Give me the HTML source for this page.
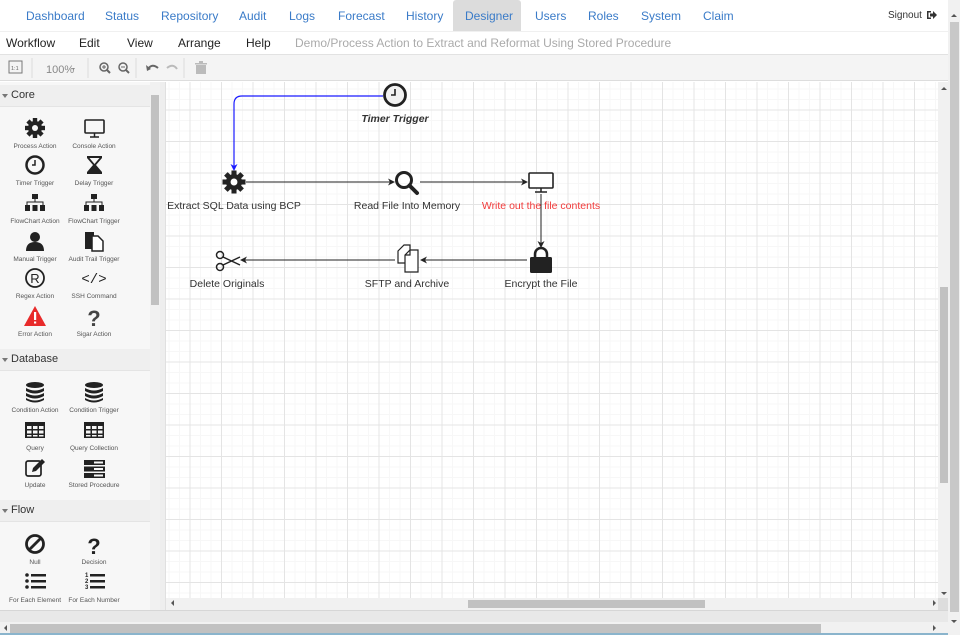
<!DOCTYPE html>
<html><head><meta charset="utf-8"><style>
*{margin:0;padding:0;box-sizing:border-box}
body{width:960px;height:635px;overflow:hidden;background:#fff;font-family:"Liberation Sans",sans-serif;position:relative}
.a{position:absolute}
.nav span{position:absolute;top:9px;font-size:12px;color:#3a7bc8}
.menu span{position:absolute;top:36px;font-size:12px;color:#222}
.lbl{position:absolute;font-size:6.5px;color:#555;width:70px;text-align:center}
.hdr{position:absolute;left:0;width:150px;height:22px;background:#efefef;font-size:11px;color:#333;padding:4px 0 0 11px;border-bottom:1px solid #e4e4e4}
.hdr:before{content:"";position:absolute;left:2px;top:9px;border-left:3px solid transparent;border-right:3px solid transparent;border-top:4px solid #777}
.cl{position:absolute;font-size:10.5px;color:#333;text-align:center;width:180px}
</style></head><body>
<div class="a" style="left:453px;top:0;width:68px;height:31px;background:#dcdcdc;border-radius:3px 3px 0 0"></div>
<div class="nav">
<span style="left:26px">Dashboard</span><span style="left:105px">Status</span><span style="left:161px">Repository</span><span style="left:239px">Audit</span><span style="left:289px">Logs</span><span style="left:338px">Forecast</span><span style="left:406px">History</span><span style="left:465px">Designer</span><span style="left:535px">Users</span><span style="left:588px">Roles</span><span style="left:641px">System</span><span style="left:703px">Claim</span>
</div>
<div class="a" style="left:888px;top:10px;font-size:10px;color:#333">Signout</div>
<svg class="a" style="left:926px;top:10px" width="12" height="10"><path d="M1 1h4v1.5H2.5v5H5V9H1z" fill="#333"/><path d="M4 3.5h3V1l4 4-4 4V6.5H4z" fill="#333"/></svg>
<div class="a" style="left:0;top:31px;width:948px;height:24px;border-top:1px solid #f0f0f0;border-bottom:1px solid #e2e2e2"></div>
<div class="menu">
<span style="left:6px">Workflow</span><span style="left:79px">Edit</span><span style="left:127px">View</span><span style="left:178px">Arrange</span><span style="left:246px">Help</span><span style="left:295px;color:#aaa">Demo/Process Action to Extract and Reformat Using Stored Procedure</span>
</div>
<div class="a" style="left:0;top:55px;width:948px;height:26px;background:#f4f4f4;border-bottom:1px solid #ddd"></div>
<svg class="a" style="left:0;top:55px" width="220" height="26">
<rect x="9" y="6" width="13" height="12" fill="none" stroke="#777" stroke-width="1"/><text x="11" y="15" font-size="5.5" fill="#666" font-family="Liberation Sans">1:1</text>
<line x1="32" y1="3" x2="32" y2="23" stroke="#ddd"/>
<text x="46" y="18" font-size="11" fill="#888" font-family="Liberation Sans">100%</text><path d="M72 13l3 0-1.5 2z" fill="#888"/>
<line x1="88" y1="3" x2="88" y2="23" stroke="#ddd"/>
<circle cx="104" cy="12" r="4" fill="none" stroke="#666" stroke-width="1.5"/><line x1="107" y1="15" x2="110" y2="18" stroke="#666" stroke-width="2"/><path d="M102 12h4M104 10v4" stroke="#666"/>
<circle cx="123" cy="12" r="4" fill="none" stroke="#666" stroke-width="1.5"/><line x1="126" y1="15" x2="129" y2="18" stroke="#666" stroke-width="2"/><path d="M121 12h4" stroke="#666"/>
<line x1="136" y1="3" x2="136" y2="23" stroke="#ddd"/>
<path d="M148 14q4-6 10-1" fill="none" stroke="#666" stroke-width="2"/><path d="M146 10l1 6 4-2z" fill="#666"/>
<path d="M177 14q-4-6-10-1" fill="none" stroke="#bbb" stroke-width="2"/>
<line x1="184" y1="3" x2="184" y2="23" stroke="#ddd"/>
<path d="M195 8h12v1.5h-12zM199 6h4v2h-4zM196 10h10v9h-10z" fill="#bbb"/>
</svg>
<div class="a" style="left:0;top:82px;width:150px;height:528px;background:#f7f7f7"></div>
<div class="a" style="left:150px;top:82px;width:10px;height:528px;background:#f1f1f1"></div>
<div class="a" style="left:151px;top:95px;width:8px;height:210px;background:#c1c1c1"></div>
<div class="a" style="left:160px;top:82px;width:6px;height:528px;background:#eee;border-right:1px solid #e0e0e0"></div>
<div class="hdr" style="top:85px">Core</div>
<div class="hdr" style="top:349px">Database</div>
<div class="hdr" style="top:500px">Flow</div>
<div class="lbl" style="left:0;top:143px">Process Action</div><div class="lbl" style="left:59px;top:143px">Console Action</div>
<div class="lbl" style="left:0;top:180px">Timer Trigger</div><div class="lbl" style="left:59px;top:180px">Delay Trigger</div>
<div class="lbl" style="left:0;top:218px">FlowChart Action</div><div class="lbl" style="left:59px;top:218px">FlowChart Trigger</div>
<div class="lbl" style="left:0;top:256px">Manual Trigger</div><div class="lbl" style="left:59px;top:256px">Audit Trail Trigger</div>
<div class="lbl" style="left:0;top:293px">Regex Action</div><div class="lbl" style="left:59px;top:293px">SSH Command</div>
<div class="lbl" style="left:0;top:331px">Error Action</div><div class="lbl" style="left:59px;top:331px">Sigar Action</div>
<div class="lbl" style="left:0;top:407px">Condition Action</div><div class="lbl" style="left:59px;top:407px">Condition Trigger</div>
<div class="lbl" style="left:0;top:445px">Query</div><div class="lbl" style="left:59px;top:445px">Query Collection</div>
<div class="lbl" style="left:0;top:482px">Update</div><div class="lbl" style="left:59px;top:482px">Stored Procedure</div>
<div class="lbl" style="left:0;top:559px">Null</div><div class="lbl" style="left:59px;top:559px">Decision</div>
<div class="lbl" style="left:0;top:597px">For Each Element</div><div class="lbl" style="left:59px;top:597px">For Each Number</div>
<svg class="a" style="left:0;top:0" width="150" height="610">
<defs>
<g id="gear"><circle r="7" fill="#222"/><g fill="#222"><rect x="-2.2" y="-10" width="4.4" height="20"/><rect x="-2.2" y="-10" width="4.4" height="20" transform="rotate(45)"/><rect x="-2.2" y="-10" width="4.4" height="20" transform="rotate(90)"/><rect x="-2.2" y="-10" width="4.4" height="20" transform="rotate(135)"/></g><circle r="3" fill="#f7f7f7"/></g>
<g id="db"><ellipse cx="0" cy="-7" rx="9" ry="3" fill="#222"/><path d="M-9-4q9 5 18 0v3q-9 5-18 0zM-9 1q9 5 18 0v3q-9 5-18 0zM-9 6q9 5 18 0v2q-9 5-18 0z" fill="#222"/></g>
<g id="tbl"><rect x="-10" y="-8" width="20" height="16" fill="#222"/><g fill="#f7f7f7"><rect x="-8" y="-4" width="4.5" height="3"/><rect x="-2" y="-4" width="4.5" height="3"/><rect x="4" y="-4" width="4.5" height="3"/><rect x="-8" y="0.5" width="4.5" height="3"/><rect x="-2" y="0.5" width="4.5" height="3"/><rect x="4" y="0.5" width="4.5" height="3"/><rect x="-8" y="5" width="4.5" height="1.5"/><rect x="-2" y="5" width="4.5" height="1.5"/><rect x="4" y="5" width="4.5" height="1.5"/></g></g>
</defs>
<use href="#gear" x="35" y="128"/>
<rect x="85" y="120" width="19" height="13" rx="1" fill="none" stroke="#222" stroke-width="1.6"/><path d="M90 137h9M94.5 133v4" stroke="#222" stroke-width="1.5"/>
<circle cx="35" cy="165" r="8.5" fill="none" stroke="#222" stroke-width="2.5"/><path d="M35 160v5h-3" fill="none" stroke="#222" stroke-width="1.5"/>
<path d="M87 156h15v2l-6 7 6 7v2H87v-2l6-7-6-7z" fill="#222"/><path d="M89.5 158h10l-5 6z" fill="#f7f7f7"/>
<g fill="#222"><rect x="32" y="194" width="6" height="5"/><rect x="25" y="205" width="5" height="6"/><rect x="32.5" y="205" width="5" height="6"/><rect x="40" y="205" width="5" height="6"/><path d="M27 205v-3h16v3M35 199v3" stroke="#222" fill="none"/></g>
<g fill="#222"><rect x="91" y="194" width="6" height="5"/><rect x="84" y="205" width="5" height="6"/><rect x="91.5" y="205" width="5" height="6"/><rect x="99" y="205" width="5" height="6"/><path d="M86 205v-3h16v3M94 199v3" stroke="#222" fill="none"/></g>
<circle cx="35" cy="237" r="5" fill="#222"/><path d="M26 251q0-9 9-9t9 9z" fill="#222"/>
<path d="M85 232h9v17h-9z" fill="#222"/><path d="M92 236h6l5 5v10H92z" fill="#fff" stroke="#222" stroke-width="1.5"/>
<circle cx="35" cy="278" r="9" fill="none" stroke="#222" stroke-width="1.8"/><text x="35" y="283" font-size="13" text-anchor="middle" fill="#222" font-family="Liberation Sans">R</text>
<text x="94" y="283" font-size="14" text-anchor="middle" fill="#222" font-family="Liberation Mono">&lt;/&gt;</text>
<path d="M35 306l11 20H24z" fill="#e82b2b"/><rect x="34" y="312" width="2.2" height="8" fill="#fff"/><rect x="34" y="321.5" width="2.2" height="2" fill="#fff"/>
<text x="94" y="326" font-size="22" font-weight="bold" text-anchor="middle" fill="#444" font-family="Liberation Sans">?</text>
<use href="#db" x="35" y="392"/><use href="#db" x="94" y="392"/>
<use href="#tbl" x="35" y="430"/><use href="#tbl" x="94" y="430"/>
<rect x="26" y="461" width="15" height="15" rx="2" fill="none" stroke="#222" stroke-width="1.7"/><path d="M32 472l1-4 9-9 3 3-9 9z" fill="#222"/>
<g fill="#222"><rect x="84" y="460" width="21" height="5"/><rect x="84" y="466.5" width="21" height="5"/><rect x="84" y="473" width="21" height="5"/></g>
<g fill="#f7f7f7"><rect x="94" y="461.5" width="9" height="2"/><rect x="94" y="468" width="9" height="2"/><rect x="94" y="474.5" width="9" height="2"/></g>
<circle cx="35" cy="544" r="8.5" fill="none" stroke="#222" stroke-width="2.8"/><line x1="29" y1="550" x2="41" y2="538" stroke="#222" stroke-width="2.8"/>
<text x="94" y="554" font-size="22" font-weight="bold" text-anchor="middle" fill="#222" font-family="Liberation Sans">?</text>
<g fill="#222"><circle cx="27" cy="575" r="1.8"/><circle cx="27" cy="581" r="1.8"/><circle cx="27" cy="587" r="1.8"/><rect x="31" y="574" width="15" height="2.5"/><rect x="31" y="580" width="15" height="2.5"/><rect x="31" y="586" width="15" height="2.5"/></g>
<g fill="#222" font-size="6" font-family="Liberation Sans" font-weight="bold"><text x="85" y="577">1</text><text x="85" y="583">2</text><text x="85" y="589">3</text><rect x="90" y="574" width="15" height="2.5"/><rect x="90" y="580" width="15" height="2.5"/><rect x="90" y="586" width="15" height="2.5"/></g>
<path d="M152 600l3 3 3-3z" fill="#555"/><path d="M152 92l3-3 3 3z" fill="#999"/>
</svg>
<div class="a" style="left:166px;top:82px;width:772px;height:516px;background-color:#fff;background-image:linear-gradient(#e4e4e4 1px,transparent 1px),linear-gradient(90deg,#e4e4e4 1px,transparent 1px),linear-gradient(#f7f7f7 1px,transparent 1px),linear-gradient(90deg,#f7f7f7 1px,transparent 1px);background-size:31.5px 31.5px,31.5px 31.5px,10.5px 10.5px,10.5px 10.5px;background-position:-8px -4px"></div>
<div class="a" style="left:938px;top:82px;width:10px;height:516px;background:#f1f1f1"></div>
<div class="a" style="left:940px;top:287px;width:8px;height:196px;background:#c1c1c1"></div>
<div class="a" style="left:166px;top:598px;width:772px;height:12px;background:#f1f1f1"></div>
<div class="a" style="left:468px;top:600px;width:237px;height:8px;background:#c1c1c1"></div>
<div class="a" style="left:938px;top:598px;width:10px;height:12px;background:#ddd"></div>
<div class="a" style="left:0;top:610px;width:948px;height:12px;background:#e8e8e8;border-top:1px solid #d6d6d6"></div>
<div class="a" style="left:948px;top:0;width:12px;height:635px;background:#f1f1f1"></div>
<div class="a" style="left:950px;top:22px;width:9px;height:590px;background:#c8c8c8"></div>
<div class="a" style="left:0;top:622px;width:948px;height:13px;background:#f1f1f1"></div>
<div class="a" style="left:10px;top:624px;width:811px;height:9px;background:#c1c1c1"></div>
<div class="a" style="left:0;top:633px;width:948px;height:2px;background:#8ab4cc"></div>
<svg class="a" style="left:0;top:0" width="960" height="635">
<path d="M941 90l3-3 3 3zM941 592l3 3 3-3zM171 603l3-3v6zM933 600l3 3-3 3zM951 620l3 3 3-3zM951 17l3-3 3 3zM4 628l3-3v6zM933 625l3 3-3 3z" fill="#555"/>
<path d="M383 96H242q-8 0-8 8v62" fill="none" stroke="#1a1aff" stroke-width="1.2"/><path d="M230.5 164l3.5 7 3.5-7-3.5 2z" fill="#1a1aff"/>
<g stroke="#222" stroke-width="1" fill="none"><path d="M246 182H392M420 182H525M541 194V245M527 260H423M395 260H243"/></g>
<g fill="#222"><path d="M395 182l-7-3.5 2 3.5-2 3.5zM528 182l-7-3.5 2 3.5-2 3.5zM541 248l-3.5-7 3.5 2 3.5-2zM420 260l7-3.5-2 3.5 2 3.5zM240 260l7-3.5-2 3.5 2 3.5z"/></g>
<circle cx="395" cy="95" r="10.5" fill="#f2f2f2" stroke="#222" stroke-width="2.8"/><path d="M395 89v6h-4" fill="none" stroke="#222" stroke-width="1.6"/>
<g transform="translate(234 182) scale(1.15)"><circle r="7" fill="#222"/><g fill="#222"><rect x="-2.2" y="-10" width="4.4" height="20"/><rect x="-2.2" y="-10" width="4.4" height="20" transform="rotate(45)"/><rect x="-2.2" y="-10" width="4.4" height="20" transform="rotate(90)"/><rect x="-2.2" y="-10" width="4.4" height="20" transform="rotate(135)"/></g><circle r="3" fill="#fff"/></g>
<circle cx="404" cy="180" r="7.5" fill="none" stroke="#222" stroke-width="3"/><line x1="409.5" y1="185.5" x2="417" y2="193" stroke="#222" stroke-width="4" stroke-linecap="round"/>
<rect x="529" y="173" width="24" height="15" rx="1" fill="#fff" stroke="#222" stroke-width="1.6"/><path d="M535 192h12M541 188v4" stroke="#222" stroke-width="1.5"/>
<path d="M535 258v-4a6 6 0 0 1 12 0v4" fill="none" stroke="#222" stroke-width="2.5"/><rect x="530" y="257" width="22" height="16" rx="1.5" fill="#222"/>
<path d="M398 251l6-6h6v18h-12z" fill="#fff" stroke="#222" stroke-width="1.2"/><path d="M405 255l5-5h8v22h-13z" fill="#fff" stroke="#222" stroke-width="1.2"/><path d="M405 255h5v-5" fill="none" stroke="#222" stroke-width="1.2"/>
<g fill="none" stroke="#222" stroke-width="1.5"><circle cx="220" cy="255" r="3.5"/><circle cx="220" cy="267" r="3.5"/><path d="M223 257l17 8M223 265l17-8"/></g>
</svg>
<div class="cl" style="left:305px;top:113px;font-weight:bold;font-style:italic;font-size:10.5px">Timer Trigger</div>
<div class="cl" style="left:144px;top:200px">Extract SQL Data using BCP</div>
<div class="cl" style="left:317px;top:200px">Read File Into Memory</div>
<div class="cl" style="left:451px;top:200px;color:#f23b3b">Write out the file contents</div>
<div class="cl" style="left:137px;top:278px">Delete Originals</div>
<div class="cl" style="left:317px;top:278px">SFTP and Archive</div>
<div class="cl" style="left:451px;top:278px">Encrypt the File</div>
</body></html>
